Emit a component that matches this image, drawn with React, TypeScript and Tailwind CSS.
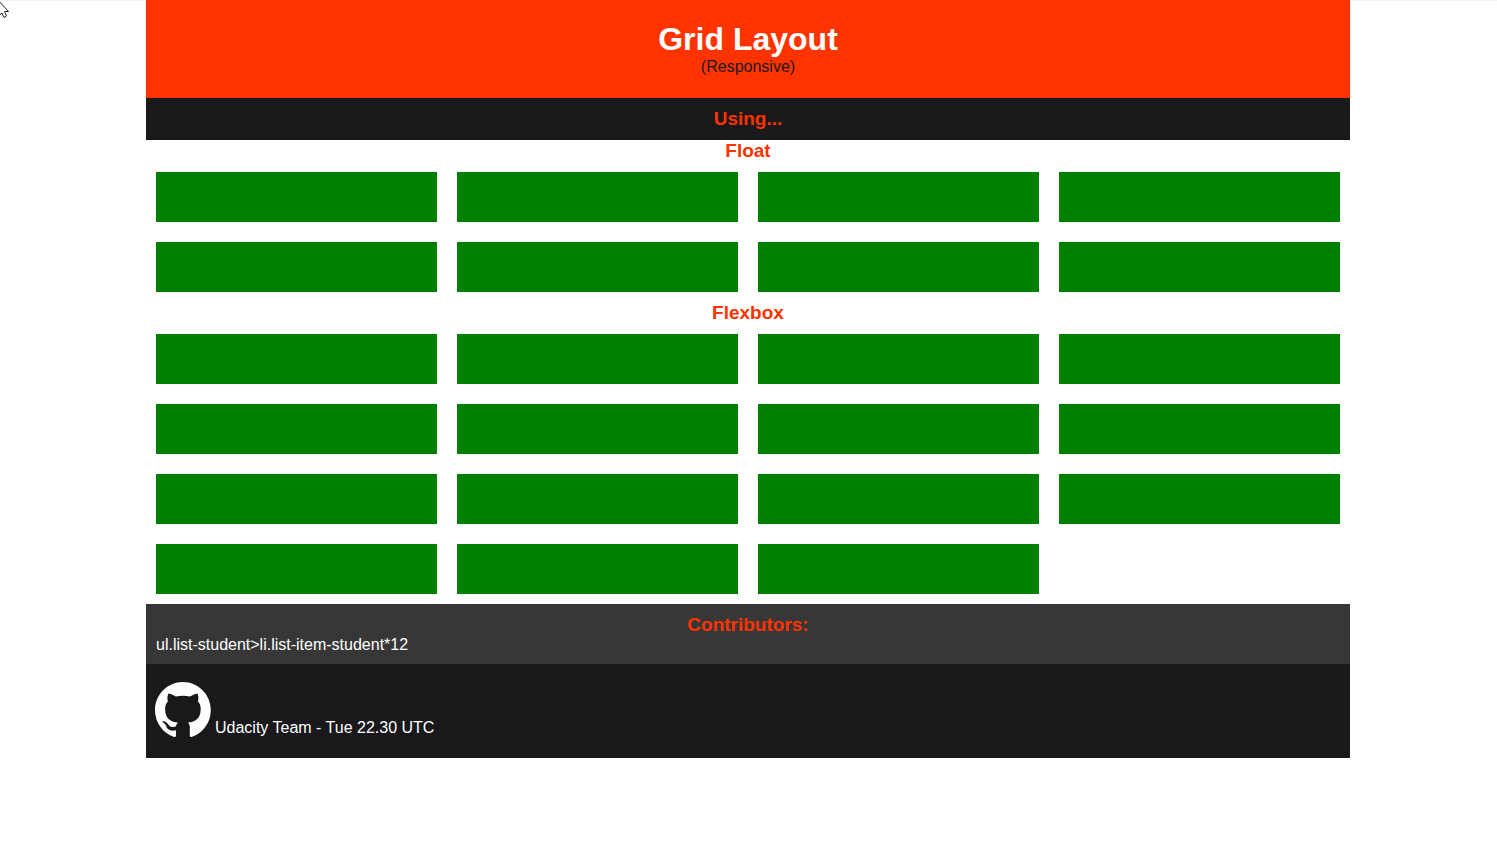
const FLOAT_BOXES = 8;
const FLEX_BOXES = 15;

function BoxGrid({ count }: { count: number }) {
  return (
    <div className="grid grid-cols-1 gap-5 p-2.5 sm:grid-cols-2 lg:grid-cols-4">
      {Array.from({ length: count }, (_, i) => (
        <div key={i} className="h-[50px] bg-[#008000]" />
      ))}
    </div>
  );
}

function Pointer() {
  return (
    <svg
      className="pointer-events-none absolute left-0 top-0 h-5 w-3"
      viewBox="0 0 12 20"
      aria-hidden="true"
    >
      <path
        d="M-2.5 -1.5L8.5 10.5H4.5L6.5 15L4 16.5L2 12L-2.5 15.5Z"
        fill="#fff"
        stroke="#1c1c28"
        strokeWidth="1"
      />
    </svg>
  );
}

function GithubMark() {
  return (
    <svg className="h-[55px] w-14" viewBox="0 0 98 96" fill="#fff" aria-hidden="true">
      <path
        fillRule="evenodd"
        clipRule="evenodd"
        d="M48.854 0C21.839 0 0 22 0 49.217c0 21.756 13.993 40.172 33.405 46.69 2.427.49 3.316-1.059 3.316-2.362 0-1.141-.08-5.052-.08-9.127-13.59 2.934-16.42-5.867-16.42-5.867-2.184-5.704-5.42-7.17-5.42-7.17-4.448-3.015.324-3.015.324-3.015 4.934.326 7.523 5.052 7.523 5.052 4.367 7.496 11.404 5.378 14.235 4.074.404-3.178 1.699-5.378 3.074-6.6-10.839-1.141-22.243-5.378-22.243-24.283 0-5.378 1.94-9.778 5.014-13.2-.485-1.222-2.184-6.275.486-13.038 0 0 4.125-1.304 13.426 5.052a46.97 46.97 0 0 1 12.214-1.63c4.125 0 8.33.571 12.213 1.63 9.302-6.356 13.427-5.052 13.427-5.052 2.67 6.763.97 11.816.485 13.038 3.155 3.422 5.015 7.822 5.015 13.2 0 18.905-11.404 23.06-22.324 24.283 1.78 1.548 3.316 4.481 3.316 9.126 0 6.6-.08 11.897-.08 13.526 0 1.304.89 2.853 3.316 2.364 19.412-6.52 33.405-24.935 33.405-46.691C97.707 22 75.788 0 48.854 0z"
      />
    </svg>
  );
}

function SectionTitle({ children }: { children: string }) {
  return (
    <h2 className="text-center text-[19px] leading-[22px] font-bold text-[#ff3300]">{children}</h2>
  );
}

export default function App() {
  return (
    <div className="relative min-h-screen border-t border-[#f5f5f5] bg-white pr-px font-['Liberation_Sans',Arial,sans-serif] text-base leading-[18px]">
      <div className="mx-auto -mt-px max-w-[1204px]">
        <header className="bg-[#ff3300] pt-[21px] pb-[22px] text-center">
          <h1 className="text-[32px] leading-[37px] font-bold text-white">Grid Layout</h1>
          <p className="text-[#1a1a1b]">(Responsive)</p>
        </header>

        <div className="bg-[#19191b] p-2.5">
          <SectionTitle>Using...</SectionTitle>
        </div>

        <main>
          <section>
            <SectionTitle>Float</SectionTitle>
            <BoxGrid count={FLOAT_BOXES} />
          </section>
          <section>
            <SectionTitle>Flexbox</SectionTitle>
            <BoxGrid count={FLEX_BOXES} />
          </section>
        </main>

        <section className="bg-[#373737] p-2.5 text-white">
          <SectionTitle>Contributors:</SectionTitle>
          <p>ul.list-student&gt;li.list-item-student*12</p>
        </section>

        <footer className="flex items-end gap-1 bg-[#19191b] px-[9px] pt-[18px] pb-[21px] text-white">
          <a href="#" aria-label="GitHub">
            <GithubMark />
          </a>
          <p>Udacity Team - Tue 22.30 UTC</p>
        </footer>
      </div>
      <Pointer />
    </div>
  );
}
